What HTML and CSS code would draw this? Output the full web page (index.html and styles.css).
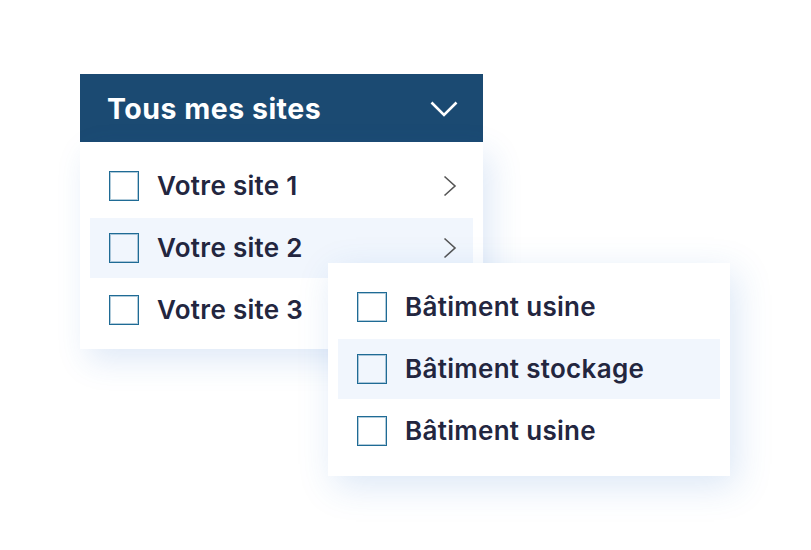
FILE: index.html
```html
<!DOCTYPE html>
<html lang="fr">
<head>
    <meta charset="UTF-8">
    <meta name="viewport" content="width=device-width, initial-scale=1.0">
    <title>Tous mes sites</title>
    <link rel="stylesheet" href="styles.css">
</head>
<body>

<div class="page">
    <div class="selector">
        <!-- Titre du menu -->
        <div class="selector-head">
            <span>Tous mes sites</span>
            <svg class="chevron-down" width="28" height="16" viewBox="0 0 28 16">
                <path d="M1.5 1.5 L14 14 L26.5 1.5" fill="none" stroke="#fff" stroke-width="2.6"/>
            </svg>
        </div>

        <!-- Liste des sites -->
        <div class="menu">
            <div class="menu-item">
                <span class="check"></span>
                <span class="label">Votre site 1</span>
                <svg class="chevron-right" width="14" height="22" viewBox="0 0 14 22">
                    <path d="M1.5 1.5 L12 11 L1.5 20.5" fill="none" stroke="#555" stroke-width="1.6"/>
                </svg>
            </div>
            <div class="menu-item active">
                <span class="check"></span>
                <span class="label">Votre site 2</span>
                <svg class="chevron-right" width="14" height="22" viewBox="0 0 14 22">
                    <path d="M1.5 1.5 L12 11 L1.5 20.5" fill="none" stroke="#555" stroke-width="1.6"/>
                </svg>
            </div>
            <div class="menu-item">
                <span class="check"></span>
                <span class="label">Votre site 3</span>
            </div>
        </div>

        <!-- Sous-menu du site 2 -->
        <div class="menu submenu">
            <div class="menu-item">
                <span class="check"></span>
                <span class="label">Bâtiment usine</span>
            </div>
            <div class="menu-item active">
                <span class="check"></span>
                <span class="label">Bâtiment stockage</span>
            </div>
            <div class="menu-item">
                <span class="check"></span>
                <span class="label">Bâtiment usine</span>
            </div>
        </div>
    </div>
</div>

</body>
</html>
```

FILE: styles.css
```css
html, body {
    height: 100%;
}
body {
    font-family: 'Inter', 'Noto Sans', sans-serif;
    background-color: #FFF;
    margin: 0;
    padding: 0;
}
.page {
    min-height: 100%;
    box-sizing: border-box;
    padding: 74px 0 0 80px;
}
.selector {
    position: relative;
    width: 403px;
}
.selector-head {
    background-color: #1B4A72;
    color: #FFF;
    height: 68px;
    padding: 0 25px 0 27px;
    display: flex;
    align-items: center;
    justify-content: space-between;
    font-size: 28.5px;
    font-weight: 700;
    letter-spacing: 0.5px;
}
.chevron-down {
    margin-top: 1px;
}
.menu {
    background-color: #FFF;
    padding: 14px 10px 9px;
    display: flex;
    flex-direction: column;
    gap: 2px;
    box-shadow: 8px 12px 30px rgba(40, 110, 200, 0.15);
}
.menu-item {
    height: 60px;
    display: flex;
    align-items: center;
    padding: 0 16px 0 19px;
    color: #23263F;
    font-size: 26px;
    font-weight: 600;
    letter-spacing: 0.3px;
}
.menu-item.active {
    background-color: #F1F6FD;
}
.check {
    box-sizing: border-box;
    width: 30px;
    height: 30px;
    border: 1px solid #1F6B95;
    box-shadow: inset 0 0 0 1px rgba(31, 107, 149, 0.35);
    background-color: #FFF;
    margin-right: 18px;
    flex-shrink: 0;
}
.active .check {
    background-color: transparent;
}
.label {
    flex: 1;
    margin-top: -2px;
}
.submenu {
    position: absolute;
    left: 248px;
    top: 189px;
    width: 382px;
    padding: 14px 10px 15px;
    box-shadow: 6px 10px 34px rgba(40, 110, 200, 0.17);
}
```
